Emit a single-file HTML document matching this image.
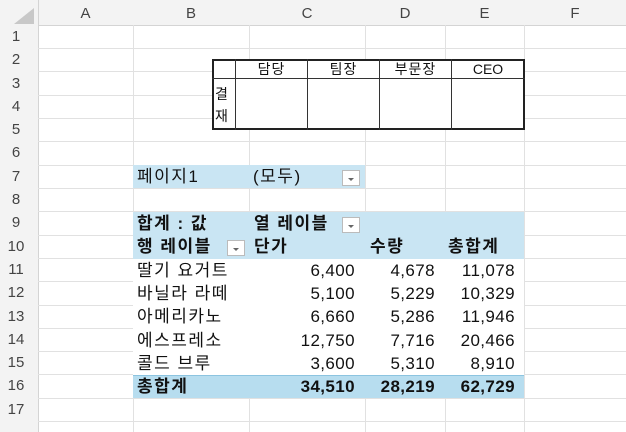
<!DOCTYPE html><html><head><meta charset="utf-8"><style>
body{margin:0;width:626px;height:432px;overflow:hidden;background:#fff;font-family:"Liberation Sans","Noto Sans CJK KR",sans-serif;position:relative}
.a{position:absolute}
.vl{position:absolute;top:25px;height:407px;width:1px;background:#e1e1e1}
.hl{position:absolute;left:38px;width:588px;height:1px;background:#e1e1e1}
.ch{position:absolute;top:0;height:25px;line-height:27px;text-align:center;font-size:15px;color:#444}
.rh{position:absolute;left:0;width:32px;text-align:center;font-size:15px;color:#444;line-height:23px;height:23px}
.t{position:absolute;font-size:17px;color:#111;white-space:nowrap;line-height:23px}
.k{letter-spacing:1.5px}
.r{text-align:right;letter-spacing:0.4px}
.b{font-weight:bold}
.dd{position:absolute;width:18px;height:16px;background:#fff;border:1px solid #bbb;box-sizing:border-box}
.dd:after{content:"";position:absolute;left:5px;top:7px;border-left:3.5px solid transparent;border-right:3.5px solid transparent;border-top:3.5px solid #666}
.s{font-size:14px;line-height:20px;text-align:center;letter-spacing:1px}
</style></head><body>
<div class="a" style="left:0;top:0;width:626px;height:25px;background:#f3f3f3;border-bottom:1px solid #d4d4d4"></div>
<div class="a" style="left:0;top:0;width:38px;height:432px;background:#f3f3f3;border-right:1px solid #d4d4d4"></div>
<div class="a" style="left:14px;top:8px;width:0;height:0;border-left:20px solid transparent;border-bottom:16px solid #c8c8c8"></div>
<div class="ch" style="left:38px;width:95px">A</div>
<div class="ch" style="left:133px;width:116px">B</div>
<div class="ch" style="left:249px;width:116px">C</div>
<div class="ch" style="left:365px;width:80px">D</div>
<div class="ch" style="left:445px;width:79px">E</div>
<div class="ch" style="left:524px;width:102px">F</div>
<div class="vl" style="left:133px"></div><div class="vl" style="left:249px"></div><div class="vl" style="left:365px"></div><div class="vl" style="left:445px"></div><div class="vl" style="left:524px"></div>
<div class="hl" style="top:48px"></div><div class="hl" style="top:71px"></div><div class="hl" style="top:95px"></div><div class="hl" style="top:118px"></div><div class="hl" style="top:141px"></div><div class="hl" style="top:165px"></div><div class="hl" style="top:188px"></div><div class="hl" style="top:211px"></div><div class="hl" style="top:235px"></div><div class="hl" style="top:258px"></div><div class="hl" style="top:281px"></div><div class="hl" style="top:305px"></div><div class="hl" style="top:328px"></div><div class="hl" style="top:351px"></div><div class="hl" style="top:374px"></div><div class="hl" style="top:398px"></div><div class="hl" style="top:421px"></div>
<div class="rh" style="top:25px">1</div><div class="rh" style="top:48px">2</div><div class="rh" style="top:72px">3</div><div class="rh" style="top:95px">4</div><div class="rh" style="top:118px">5</div><div class="rh" style="top:141px">6</div><div class="rh" style="top:165px">7</div><div class="rh" style="top:188px">8</div><div class="rh" style="top:211px">9</div><div class="rh" style="top:235px">10</div><div class="rh" style="top:258px">11</div><div class="rh" style="top:281px">12</div><div class="rh" style="top:305px">13</div><div class="rh" style="top:328px">14</div><div class="rh" style="top:351px">15</div><div class="rh" style="top:374px">16</div><div class="rh" style="top:398px">17</div>
<!-- approval table -->
<div class="a" style="left:212px;top:59px;width:313px;height:71px;background:#fff;border:2px solid #222;box-sizing:border-box"></div>
<div class="a" style="left:212px;top:78px;width:313px;height:1px;background:#333"></div>
<div class="a" style="left:235px;top:59px;width:1px;height:71px;background:#333"></div>
<div class="a" style="left:307px;top:59px;width:1px;height:71px;background:#333"></div>
<div class="a" style="left:379px;top:59px;width:1px;height:71px;background:#333"></div>
<div class="a" style="left:451px;top:59px;width:1px;height:71px;background:#333"></div>
<div class="t s" style="left:236px;width:71px;top:59px">담당</div>
<div class="t s" style="left:308px;width:71px;top:59px">팀장</div>
<div class="t s" style="left:380px;width:71px;top:59px">부문장</div>
<div class="t s" style="left:452px;width:72px;top:59px;letter-spacing:0">CEO</div>
<div class="t s" style="left:215px;top:83px;line-height:22px">결<br>재</div>
<!-- pivot -->
<div class="a" style="left:133px;top:165px;width:232px;height:23px;background:#c9e5f3"></div>
<div class="t k" style="left:137px;top:165px">페이지1</div>
<div class="t k" style="left:253px;top:165px">(모두)</div>
<div class="dd" style="left:342px;top:170px"></div>
<div class="a" style="left:133px;top:212px;width:391px;height:47px;background:#c9e5f3"></div>
<div class="t b k" style="left:137px;top:212px">합계 : 값</div>
<div class="t b k" style="left:254px;top:212px">열 레이블</div>
<div class="dd" style="left:342px;top:217px"></div>
<div class="t b k" style="left:137px;top:235px">행 레이블</div>
<div class="dd" style="left:227px;top:240px"></div>
<div class="t b k" style="left:254px;top:235px">단가</div>
<div class="t b k" style="left:370px;top:235px">수량</div>
<div class="t b k" style="left:448px;top:235px">총합계</div>
<div class="a" style="left:133px;top:259px;width:391px;height:116px;background:#fff"></div>
<div class="t k" style="left:137px;top:259px">딸기 요거트</div>
<div class="t r" style="left:249px;width:106px;top:259px">6,400</div><div class="t r" style="left:365px;width:70px;top:259px">4,678</div><div class="t r" style="left:445px;width:70px;top:259px">11,078</div>
<div class="t k" style="left:137px;top:282px">바닐라 라떼</div>
<div class="t r" style="left:249px;width:106px;top:282px">5,100</div><div class="t r" style="left:365px;width:70px;top:282px">5,229</div><div class="t r" style="left:445px;width:70px;top:282px">10,329</div>
<div class="t k" style="left:137px;top:305px">아메리카노</div>
<div class="t r" style="left:249px;width:106px;top:305px">6,660</div><div class="t r" style="left:365px;width:70px;top:305px">5,286</div><div class="t r" style="left:445px;width:70px;top:305px">11,946</div>
<div class="t k" style="left:137px;top:329px">에스프레소</div>
<div class="t r" style="left:249px;width:106px;top:329px">12,750</div><div class="t r" style="left:365px;width:70px;top:329px">7,716</div><div class="t r" style="left:445px;width:70px;top:329px">20,466</div>
<div class="t k" style="left:137px;top:352px">콜드 브루</div>
<div class="t r" style="left:249px;width:106px;top:352px">3,600</div><div class="t r" style="left:365px;width:70px;top:352px">5,310</div><div class="t r" style="left:445px;width:70px;top:352px">8,910</div>
<div class="a" style="left:133px;top:375px;width:391px;height:23px;background:#b7ddef;border-top:1px solid #8cc4e0;box-sizing:border-box"></div>
<div class="t b k" style="left:137px;top:375px">총합계</div>
<div class="t r b" style="left:249px;width:106px;top:375px">34,510</div><div class="t r b" style="left:365px;width:70px;top:375px">28,219</div><div class="t r b" style="left:445px;width:70px;top:375px">62,729</div>
</body></html>
